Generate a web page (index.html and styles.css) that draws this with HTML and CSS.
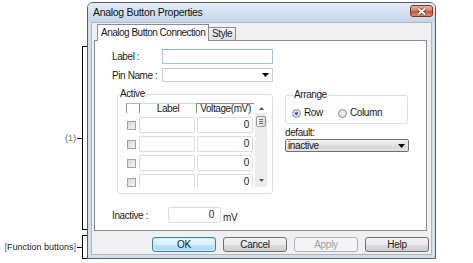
FILE: index.html
```html
<!DOCTYPE html>
<html lang="en">
<head>
    <meta charset="UTF-8">
    <title>Analog Button Properties</title>
    <link rel="stylesheet" href="styles.css">
</head>
<body>
    <div class="page">
        <div class="notes">
            <div class="note note-main">
                <span class="note-text"><span class="br">(</span><span class="num">1</span><span class="br">)</span></span>
                <span class="dash"></span>
                <span class="bracket"></span>
            </div>
            <div class="note note-buttons">
                <span class="note-text"><span class="br">[</span>Function buttons<span class="br">]</span></span>
                <span class="dash"></span>
                <span class="bracket"></span>
            </div>
        </div>

        <div class="window">
            <div class="titlebar">
                <span class="title">Analog Button Properties</span>
                <span class="close">
                    <svg width="11" height="9" viewBox="0 0 11 9">
                        <path d="M2 1.5 L9 7.5 M9 1.5 L2 7.5" stroke="#6a3a30" stroke-width="3.2"/>
                        <path d="M2 1.5 L9 7.5 M9 1.5 L2 7.5" stroke="#ffffff" stroke-width="1.8"/>
                    </svg>
                </span>
            </div>

            <div class="client">
                <div class="tabs">
                    <div class="tab tab-active">Analog Button Connection</div>
                    <div class="tab">Style</div>
                </div>

                <div class="panel">
                    <div class="field-row">
                        <label class="field-label">Label :</label>
                        <div class="textbox label-box"></div>
                    </div>
                    <div class="field-row pin-row">
                        <label class="field-label">Pin Name :</label>
                        <div class="combo pin-combo">
                            <svg class="arrow" width="7" height="4" viewBox="0 0 7 4"><polygon points="0,0 7,0 3.5,4" fill="#000"/></svg>
                        </div>
                    </div>

                    <div class="columns">
                        <fieldset class="group active-group">
                            <legend>Active</legend>
                            <div class="grid">
                                <div class="grid-body">
                                    <div class="grid-head">
                                        <span class="head head-check"></span>
                                        <span class="head head-label">Label</span>
                                        <span class="head head-volt">Voltage(mV)</span>
                                    </div>
                                    <div class="grid-row">
                                        <span class="cell-check"><span class="checkbox"></span></span>
                                        <span class="cell cell-label"></span>
                                        <span class="cell cell-volt">0</span>
                                    </div>
                                    <div class="grid-row">
                                        <span class="cell-check"><span class="checkbox"></span></span>
                                        <span class="cell cell-label"></span>
                                        <span class="cell cell-volt">0</span>
                                    </div>
                                    <div class="grid-row">
                                        <span class="cell-check"><span class="checkbox"></span></span>
                                        <span class="cell cell-label"></span>
                                        <span class="cell cell-volt">0</span>
                                    </div>
                                    <div class="grid-row">
                                        <span class="cell-check"><span class="checkbox"></span></span>
                                        <span class="cell cell-label"></span>
                                        <span class="cell cell-volt">0</span>
                                    </div>
                                </div>
                                <div class="scrollbar">
                                    <div class="sb-up">
                                        <svg width="5" height="3" viewBox="0 0 5 3"><polygon points="0,3 5,3 2.5,0" fill="#555"/></svg>
                                    </div>
                                    <div class="sb-track">
                                        <div class="sb-thumb"><span></span><span></span><span></span></div>
                                        <div class="sb-down">
                                            <svg width="5" height="3" viewBox="0 0 5 3"><polygon points="0,0 5,0 2.5,3" fill="#555"/></svg>
                                        </div>
                                    </div>
                                </div>
                            </div>
                        </fieldset>

                        <div class="right-col">
                            <fieldset class="group arrange-group">
                                <legend>Arrange</legend>
                                <div class="radios">
                                    <label class="radio"><span class="radio-dot checked"></span>Row</label>
                                    <label class="radio"><span class="radio-dot"></span>Column</label>
                                </div>
                            </fieldset>
                            <div class="default-label">default:</div>
                            <div class="combo default-combo">
                                <span>inactive</span>
                                <svg class="arrow" width="7" height="4" viewBox="0 0 7 4"><polygon points="0,0 7,0 3.5,4" fill="#000"/></svg>
                            </div>
                        </div>
                    </div>

                    <div class="field-row inactive-row">
                        <label class="field-label inactive-label">Inactive :</label>
                        <div class="textbox volt-box">0</div>
                        <span class="unit">mV</span>
                    </div>
                </div>

                <div class="buttons">
                    <button class="btn btn-default">OK</button>
                    <button class="btn">Cancel</button>
                    <button class="btn" disabled>Apply</button>
                    <button class="btn">Help</button>
                </div>
            </div>
        </div>
    </div>
</body>
</html>
```

FILE: styles.css
```css
body {
    margin: 0;
    font-family: 'Liberation Sans', Arial, sans-serif;
    font-size: 9px;
    color: #1a1a1a;
    background: #ffffff;
}
.page {
    display: flex;
    width: 473px;
    height: 263px;
    padding-top: 2px;
    box-sizing: border-box;
}

/* annotations on the left */
.notes {
    width: 87px;
    display: flex;
    flex-direction: column;
}
.note {
    display: flex;
    align-items: center;
    justify-content: flex-end;
}
.note-main {
    margin-top: 44px;
    height: 184px;
}
.note-buttons {
    margin-top: 5px;
    height: 24px;
}
.note-text {
    margin-right: 1px;
    white-space: nowrap;
}
.note-text .br {
    color: #2f63b0;
}
.note-text .num {
    color: #b8681f;
}
.dash {
    width: 5px;
    height: 1px;
    background: #000000;
}
.bracket {
    align-self: stretch;
    width: 4px;
    border: 1px solid #000000;
    border-right: none;
}

/* dialog window */
.window {
    width: 349px;
    height: 257px;
    box-sizing: border-box;
    border: 1px solid #56606b;
    border-radius: 6px 6px 0 0;
    background: #d3dfeb;
    display: flex;
    flex-direction: column;
    font-family: 'Liberation Sans', Arial, sans-serif;
    font-size: 10px;
    letter-spacing: -0.4px;
    white-space: nowrap;
    color: #1a1a1a;
}
.titlebar {
    height: 19px;
    display: flex;
    align-items: flex-start;
    justify-content: space-between;
    padding-left: 5px;
    background: linear-gradient(#e4ecf6, #c5d6ea);
    border-radius: 5px 5px 0 0;
}
.title {
    font-size: 10.5px;
    letter-spacing: -0.3px;
    line-height: 19px;
    color: #111111;
}
.close {
    width: 23px;
    height: 12px;
    box-sizing: border-box;
    margin: 2px 2px 0 0;
    border: 1px solid #7a3424;
    border-radius: 3px;
    background: linear-gradient(#eab2a2, #d98268 45%, #c8553a 55%, #da8a6c);
    display: flex;
    align-items: center;
    justify-content: center;
}
.client {
    flex: 1;
    margin: 0 3px 3px;
    border: 1px solid #a9b7c6;
    background: #f0f0f0;
    padding: 1px 0 2px;
    display: flex;
    flex-direction: column;
}

/* tabs */
.tabs {
    display: flex;
    align-items: flex-end;
    height: 16px;
    padding-left: 5px;
}
.tab {
    height: 13px;
    box-sizing: border-box;
    padding: 0 3px;
    margin-left: -1px;
    border: 1px solid #898c95;
    border-bottom: none;
    background: linear-gradient(#f5f5f5, #dedede);
    line-height: 12px;
}
.tab-active {
    position: relative;
    z-index: 1;
    height: 17px;
    margin-left: 0;
    margin-bottom: -1px;
    width: 112px;
    padding: 0 3px;
    text-align: center;
    letter-spacing: -0.5px;
    background: #ffffff;
    line-height: 16px;
}

.panel {
    margin-left: 2px;
    width: 333px;
    height: 191px;
    box-sizing: border-box;
    border: 1px solid #898c95;
    background: #ffffff;
    padding: 8px 0 0 17px;
}

/* form rows */
.field-row {
    display: flex;
    align-items: center;
}
.field-label {
    width: 50px;
}
.textbox {
    box-sizing: border-box;
    background: #ffffff;
}
.label-box {
    width: 111px;
    height: 15px;
    border: 1px solid #a9c3df;
    border-top-color: #8fb0d4;
}
.pin-row {
    margin-top: 4px;
}
.combo {
    box-sizing: border-box;
    display: flex;
    align-items: center;
    justify-content: space-between;
}
.pin-combo {
    width: 111px;
    height: 14px;
    border: 1px solid #c9ccd2;
    justify-content: flex-end;
    padding-right: 3px;
}

.columns {
    display: flex;
    gap: 12px;
    margin: 7px 0 0 5px;
}
.group {
    margin: 0;
    min-width: 0;
    border: 1px solid #d5dfe5;
    border-radius: 3px;
}
.group legend {
    padding: 0 1px;
    line-height: 10px;
}
.active-group {
    width: 156px;
    height: 105px;
    box-sizing: border-box;
    padding: 4px 0 0 8px;
}
.active-group legend {
    margin-left: -7px;
}

/* grid */
.grid {
    display: flex;
    height: 84px;
    width: 141px;
    overflow: hidden;
}
.grid-body {
    width: 128px;
    display: flex;
    flex-direction: column;
    gap: 3px;
}
.grid-head {
    display: flex;
    height: 10px;
    margin-bottom: 1px;
    flex-shrink: 0;
}
.head {
    box-sizing: border-box;
    border-top: 1px solid #b5b5b5;
    border-left: 1px solid #8e8e8e;
    text-align: center;
    line-height: 9px;
}
.head-check {
    width: 13px;
}
.head-label {
    width: 57px;
    border-top-color: #d8d8d8;
}
.head-volt {
    width: 58px;
    border-top-color: #8e8e8e;
}
.grid-row {
    display: flex;
    align-items: center;
    height: 16px;
    flex-shrink: 0;
}
.cell-check {
    width: 13px;
    display: flex;
    padding-left: 1px;
    box-sizing: border-box;
}
.checkbox {
    width: 9px;
    height: 9px;
    box-sizing: border-box;
    border: 1px solid #a2a2a2;
    background: linear-gradient(135deg, #d8d8d8, #f4f4f4);
}
.cell {
    height: 16px;
    box-sizing: border-box;
    border: 1px solid #dcdcdc;
    border-radius: 2px;
}
.cell-label {
    width: 56px;
    margin-right: 2px;
}
.cell-volt {
    width: 56px;
    text-align: right;
    padding-right: 3px;
    line-height: 14px;
}

/* scrollbar */
.scrollbar {
    width: 12px;
    margin-left: 1px;
    display: flex;
    flex-direction: column;
}
.sb-up {
    height: 10px;
    display: flex;
    align-items: center;
    justify-content: center;
    background: #ffffff;
}
.sb-track {
    flex: 1;
    background: #ececec;
    display: flex;
    flex-direction: column;
    align-items: center;
    justify-content: space-between;
    padding: 3px 0 5px;
}
.sb-thumb {
    width: 10px;
    height: 11px;
    box-sizing: border-box;
    border: 1px solid #9a9a9a;
    border-radius: 2px;
    background: linear-gradient(90deg, #f6f6f6, #dcdcdc);
    display: flex;
    flex-direction: column;
    justify-content: center;
    align-items: center;
    gap: 1px;
}
.sb-thumb span {
    width: 4px;
    height: 1px;
    background: #6e6e6e;
}
.sb-down {
    display: flex;
}

/* right column */
.right-col {
    width: 124px;
    margin-top: 1px;
}
.arrange-group {
    width: 123px;
    height: 34px;
    box-sizing: border-box;
    padding: 8px 0 0 6px;
}
.arrange-group legend {
    margin-left: 1px;
}
.radios {
    display: flex;
}
.radio {
    display: flex;
    align-items: center;
    gap: 3px;
    width: 46px;
    line-height: 10px;
}
.radio-dot {
    width: 9px;
    height: 9px;
    box-sizing: border-box;
    border-radius: 50%;
    border: 1px solid #8f8f8f;
    background: radial-gradient(circle, #f6f6f6, #d6d6d6);
}
.radio-dot.checked {
    background: radial-gradient(circle, #1f68c8 0, #4a93e0 35%, #e8e8e8 45%, #d2d2d2);
}
.default-label {
    margin-top: 4px;
    line-height: 10px;
}
.default-combo {
    margin-top: 1px;
    width: 124px;
    height: 13px;
    border: 1px solid #707070;
    border-radius: 2px;
    background: linear-gradient(#f4f4f4, #e2e2e2 50%, #d6d6d6 51%, #e4e4e4);
    padding: 0 3px 0 2px;
}

/* inactive row */
.inactive-row {
    margin-top: 13px;
}
.inactive-label {
    width: 56px;
}
.volt-box {
    width: 53px;
    height: 16px;
    border: 1px solid #dcdcdc;
    border-radius: 2px;
    text-align: right;
    padding-right: 6px;
    line-height: 14px;
}
.unit {
    margin: 4px 0 0 2px;
}

/* function buttons */
.buttons {
    display: flex;
    justify-content: flex-end;
    gap: 7px;
    padding-right: 2px;
    margin-top: 6px;
}
.btn {
    width: 64px;
    height: 15px;
    padding: 0;
    border: 1px solid #707070;
    border-radius: 3px;
    background: linear-gradient(#f2f2f2, #ebebeb 50%, #dddddd 51%, #cfcfcf);
    font-family: inherit;
    font-size: 10px;
    letter-spacing: -0.3px;
    line-height: 13px;
    color: #1a1a1a;
}
.btn-default {
    border-color: #3c7fb1;
    background: linear-gradient(#eaf6fd, #d9f0fc 50%, #bee6fd 51%, #a7d9f5);
    box-shadow: inset 0 0 0 1px #cfeaf8;
}
.btn:disabled {
    border-color: #adb2b5;
    background: #f4f4f4;
    color: #a0a0a0;
}
```
